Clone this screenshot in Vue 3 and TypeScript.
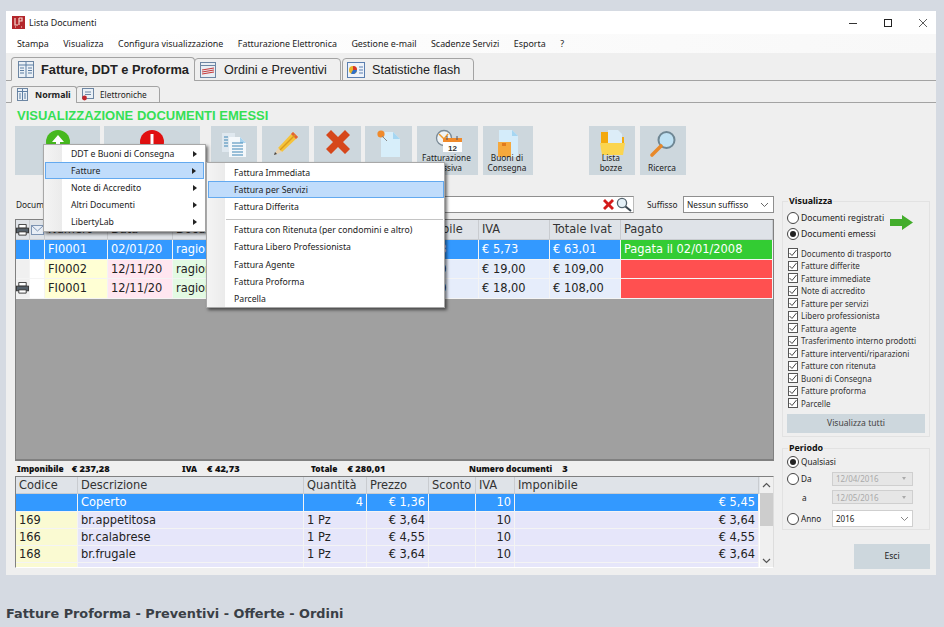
<script setup lang="ts">
const menus = ['Stampa', 'Visualizza', 'Configura visualizzazione', 'Fatturazione Elettronica', 'Gestione e-mail', 'Scadenze Servizi', 'Esporta', '?']

const tools = [
  { id: 'up', w: 85, ml: 0, label: ['', 'Emetti'] },
  { id: 'down', w: 96, ml: 4, label: ['', ''] },
  { id: 'docs', w: 46, ml: 11, label: ['', ''] },
  { id: 'pencil', w: 47, ml: 5, label: ['', ''] },
  { id: 'cross', w: 47, ml: 5, label: ['', ''] },
  { id: 'pin', w: 47, ml: 4, label: ['', ''] },
  { id: 'clock', w: 61, ml: 5, label: ['Fatturazione', 'Massiva'] },
  { id: 'box', w: 50, ml: 5, label: ['Buoni di', 'Consegna'] },
  { id: 'folder', w: 46, ml: 56, label: ['Lista', 'bozze'] },
  { id: 'lens', w: 46, ml: 5, label: ['', 'Ricerca'] },
]

const docs = [
  { print: false, num: 'FI0001', date: '02/01/20', doc: 'ragione sociale', imp: '€ 57,28', iva: '€ 5,73', tot: '€ 63,01', paid: 'Pagata il 02/01/2008', state: 'ok', sel: true },
  { print: false, num: 'FI0002', date: '12/11/20', doc: 'ragione sociale', imp: '€ 90,00', iva: '€ 19,00', tot: '€ 109,00', paid: '', state: 'no', sel: false },
  { print: true, num: 'FI0001', date: '12/11/20', doc: 'ragione sociale', imp: '€ 90,00', iva: '€ 18,00', tot: '€ 108,00', paid: '', state: 'no', sel: false },
]

const lines = [
  { c: '', d: 'Coperto', q: '4', right: true, p: '€ 1,36', iva: '10', imp: '€ 5,45', sel: true },
  { c: '169', d: 'br.appetitosa', q: '1 Pz', right: false, p: '€ 3,64', iva: '10', imp: '€ 3,64', sel: false },
  { c: '166', d: 'br.calabrese', q: '1 Pz', right: false, p: '€ 4,55', iva: '10', imp: '€ 4,55', sel: false },
  { c: '168', d: 'br.frugale', q: '1 Pz', right: false, p: '€ 3,64', iva: '10', imp: '€ 3,64', sel: false },
  { c: '', d: '', q: '', right: false, p: '', iva: '', imp: '', sel: false },
]

const checks = ['Documento di trasporto', 'Fatture differite', 'Fatture immediate', 'Note di accredito', 'Fatture per servizi', 'Libero professionista', 'Fattura agente', 'Trasferimento interno prodotti', 'Fatture interventi/riparazioni', 'Fatture con ritenuta', 'Buoni di Consegna', 'Fatture proforma', 'Parcelle']

const menu1 = ['DDT e Buoni di Consegna', 'Fatture', 'Note di Accredito', 'Altri Documenti', 'LibertyLab']
const menu2a = ['Fattura Immediata', 'Fattura per Servizi', 'Fattura Differita']
const menu2b = ['Fattura con Ritenuta (per condomini e altro)', 'Fattura Libero Professionista', 'Fattura Agente', 'Fattura Proforma', 'Parcella']
</script>

<template>
  <div class="page">
    <div class="window">
      <header class="titlebar">
        <svg class="appicon" width="13" height="13" viewBox="0 0 13 13">
          <rect width="13" height="13" fill="#b3262b" />
          <path d="M3 2v7h3M7 2v7M7 2h3v3H7M3 11h1M9 11h1" stroke="#f3d9d0" stroke-width="1.2" fill="none" />
        </svg>
        <span class="title">Lista Documenti</span>
        <div class="winbtns">
          <svg width="10" height="10" viewBox="0 0 10 10"><path d="M1 5.500h8" stroke="#333" /></svg>
          <svg width="10" height="10" viewBox="0 0 10 10"><rect x="1.500" y="1.500" width="7" height="7" fill="none" stroke="#222" /></svg>
          <svg width="10" height="10" viewBox="0 0 10 10"><path d="M1 1l8 8M9 1l-8 8" stroke="#333" stroke-width=".8" /></svg>
        </div>
      </header>

      <nav class="menubar">
        <span v-for="m in menus" :key="m">{{ m }}</span>
      </nav>

      <div class="maintabs">
        <div class="maintab active">
          <svg width="16" height="17" viewBox="0 0 16 17"><rect x=".5" y=".5" width="15" height="16" fill="#eaf0f6" stroke="#6d86a3" /><path d="M0 4h16M8 1v15M2 7h4M2 9.500h4M2 12h4M10 7h4M10 9.500h4M10 12h4" stroke="#5d7ea3" /></svg>
          <span>Fatture, DDT e Proforma</span>
        </div>
        <div class="maintab t2">
          <svg width="16" height="16" viewBox="0 0 16 16"><rect x=".5" y=".5" width="15" height="15" fill="#e9eef3" stroke="#6d86a3" /><path d="M0 3.500h16" stroke="#6d86a3" /><path d="M2 8l12-2M2 10l12-2M2 12l12-2" stroke="#c63d3d" stroke-width="1.200" /></svg>
          <span>Ordini e Preventivi</span>
        </div>
        <div class="maintab t3">
          <svg width="18" height="16" viewBox="0 0 18 16"><rect x=".5" y=".5" width="17" height="15" fill="#eef3fa" stroke="#5b7fb0" /><circle cx="6" cy="8" r="4" fill="#e8b62b" /><path d="M6 8V4a4 4 0 0 1 4 4z" fill="#d9362b" /><path d="M6 8h4a4 4 0 0 1-6 3.400z" fill="#2f6fc9" /><path d="M12 5h4M12 8h4M12 11h4" stroke="#5b7fb0" /></svg>
          <span>Statistiche flash</span>
        </div>
      </div>

      <div class="subtabs">
        <div class="subtab active">
          <svg width="11" height="13" viewBox="0 0 11 13"><rect x=".5" y=".5" width="10" height="12" fill="#eaf0f6" stroke="#6d86a3" /><path d="M0 3.500h11M5.500 1v11M2 6h2M2 8h2M2 10h2M7 6h2M7 8h2M7 10h2" stroke="#5d7ea3" /></svg>
          <span>Normali</span>
        </div>
        <div class="subtab t2">
          <svg width="13" height="13" viewBox="0 0 13 13"><rect x="1.500" y=".5" width="11" height="10" fill="#eaf0f6" stroke="#6d86a3" /><path d="M4 4h6M4 6.500h6" stroke="#6d86a3" /><circle cx="3.500" cy="10" r="2.400" fill="#c1272d" /></svg>
          <span>Elettroniche</span>
        </div>
      </div>

      <div class="content">
        <h1 class="heading">VISUALIZZAZIONE DOCUMENTI EMESSI</h1>

        <div class="toolbar">
          <div v-for="t in tools" :key="t.id" class="tool" :style="{ width: t.w + 'px', marginLeft: t.ml + 'px' }">
            <div class="toolicon">
              <svg v-if="t.id === 'up'" width="24" height="24" viewBox="0 0 24 24"><circle cx="12" cy="12" r="12" fill="#46b81e" /><path d="M12 5l6 7h-4v6h-4v-6H6z" fill="#fff" /></svg>
              <svg v-else-if="t.id === 'down'" width="24" height="24" viewBox="0 0 24 24"><circle cx="12" cy="12" r="12" fill="#e01010" /><path d="M10.500 4h3v11h-3z" fill="#fff" /></svg>
              <svg v-else-if="t.id === 'docs'" width="26" height="28" viewBox="0 0 26 28"><path d="M1 3h13v19H1z" fill="#dfe8ef" /><path d="M8 7h11l6 6v14H8z" fill="#f4f8fb" /><path d="M19 7l6 6h-6z" fill="#a9d3ee" /><path d="M3 7h4M3 10h4M3 13h4M3 16h4M11 13h11M11 16h11M11 19h11M11 22h11M11 25h11" stroke="#3f86b5" stroke-width="1.100" /></svg>
              <svg v-else-if="t.id === 'pencil'" width="26" height="26" viewBox="0 0 26 26"><path d="M5 18L20 2l5 5L9 22z" fill="#f5c33b" /><path d="M20 2l5 5-2 2-5-5z" fill="#e2603c" /><path d="M5 18l4 4-8 3z" fill="#e9d3b0" /><path d="M1 25l1-3 2 2z" fill="#444" /><path d="M7 20L22 5" stroke="#d99b1d" stroke-width="1.500" /></svg>
              <svg v-else-if="t.id === 'cross'" width="24" height="24" viewBox="0 0 24 24"><path d="M5 0l7 7 7-7 5 5-7 7 7 7-5 5-7-7-7 7-5-5 7-7-7-7z" fill="#d6471b" /></svg>
              <svg v-else-if="t.id === 'pin'" width="24" height="27" viewBox="0 0 24 27"><path d="M4 2h12l7 7v18H4z" fill="#d7eefa" /><path d="M16 2l7 7h-7z" fill="#a5d6f2" /><circle cx="4" cy="4" r="3.600" fill="#f08a2b" /><path d="M5 6l5 5" stroke="#888" /></svg>
              <svg v-else-if="t.id === 'clock'" width="28" height="22" viewBox="0 0 28 22"><circle cx="10" cy="8" r="7.500" fill="#f0f3f5" stroke="#7a8a96" stroke-width="1.300" /><path d="M5 4l5 5 4-5" fill="none" stroke="#f09a2b" stroke-width="1.500" /><rect x="9" y="9" width="19" height="13" fill="#fff" /><rect x="9" y="8" width="19" height="4" fill="#f08a2b" /><path d="M13 6v4M23 6v4" stroke="#556" /><text x="18.500" y="21" class="caltext">12</text></svg>
              <svg v-else-if="t.id === 'box'" width="22" height="27" viewBox="0 0 22 27"><path d="M2 0h13l6 6v21H2z" fill="#d4ecfa" /><path d="M15 0l6 6h-6z" fill="#a5d6f2" /><path d="M1 12h13v15H1z" fill="#f6a83c" /><path d="M5 13h4v3H5z" fill="#e07a1e" /></svg>
              <svg v-else-if="t.id === 'folder'" width="25" height="25" viewBox="0 0 25 25"><path d="M1 2h8v5h15v8H1z" fill="#f3a90e" /><path d="M8 0h10l4 4v14H8z" fill="#dcedf8" /><path d="M0 13h25l-2 12H2z" fill="#fbd54f" /></svg>
              <svg v-else width="26" height="27" viewBox="0 0 26 27"><circle cx="16.500" cy="10" r="8" fill="#bfe1f3" stroke="#6f8794" stroke-width="2" /><path d="M11 16L2 25" stroke="#e8892a" stroke-width="3.600" stroke-linecap="round" /></svg>
            </div>
            <div class="toollabel">
              <span>{{ t.label[0] }}&nbsp;</span>
              <span>{{ t.label[1] }}&nbsp;</span>
            </div>
          </div>
        </div>

        <div class="columns">
          <div class="leftcol">
            <div class="filter">
              <span class="flabel">Documento</span>
              <div class="finput">
                <svg width="11" height="11" viewBox="0 0 11 11"><path d="M2 0l3.500 3.500L9 0l2 2-3.500 3.500L11 9l-2 2-3.500-3.500L2 11 0 9l3.500-3.500L0 2z" fill="#d31a1a" /></svg>
                <svg width="16" height="15" viewBox="0 0 16 15"><circle cx="6" cy="6" r="4.600" fill="#e5f1f8" stroke="#54646e" stroke-width="1.300" /><path d="M9.500 9.500L15 14" stroke="#3a4650" stroke-width="2" /></svg>
              </div>
              <span class="sfx">Suffisso</span>
              <div class="fselect">
                <span>Nessun suffisso</span>
                <svg width="9" height="6" viewBox="0 0 9 6"><path d="M1 1l3.500 3.500L8 1" fill="none" stroke="#666" /></svg>
              </div>
            </div>

            <div class="grid1">
              <div class="row1 head">
                <div class="cell icell"><svg width="14" height="12" viewBox="0 0 14 12"><path d="M3 0h8v4H3z" fill="#fff" stroke="#333" /><rect x=".5" y="4" width="13" height="5" fill="#55606a" stroke="#333" /><path d="M3 8h8v3.500H3z" fill="#fff" stroke="#333" /></svg></div>
                <div class="cell icell"><svg width="13" height="10" viewBox="0 0 13 10"><rect x=".5" y=".5" width="12" height="9" fill="#e8eef6" stroke="#7d94b3" /><path d="M.5 .5L6.500 6l6-5.500" fill="none" stroke="#7d94b3" /></svg></div>
                <div class="cell">Numero</div>
                <div class="cell">Data</div>
                <div class="cell">Documento</div>
                <div class="cell">Imponibile</div>
                <div class="cell">IVA</div>
                <div class="cell">Totale Ivat</div>
                <div class="cell">Pagato</div>
              </div>
              <div v-for="(r, i) in docs" :key="i" class="row1 body" :class="{ sel: r.sel }">
                <div class="cell icell c-grey"><svg v-if="r.print" width="14" height="12" viewBox="0 0 14 12"><path d="M3 0h8v4H3z" fill="#fff" stroke="#333" /><rect x=".5" y="4" width="13" height="5" fill="#55606a" stroke="#333" /><path d="M3 8h8v3.500H3z" fill="#fff" stroke="#333" /></svg></div>
                <div class="cell icell c-white"></div>
                <div class="cell c-yellow">{{ r.num }}</div>
                <div class="cell c-pink">{{ r.date }}</div>
                <div class="cell c-green">{{ r.doc }}</div>
                <div class="cell c-blue">{{ r.imp }}</div>
                <div class="cell c-blue">{{ r.iva }}</div>
                <div class="cell c-blue">{{ r.tot }}</div>
                <div class="cell" :class="r.state === 'ok' ? 'paid' : 'unpaid'">{{ r.paid }}</div>
              </div>
            </div>

            <div class="totals">
              <span class="t-a"><b>Imponibile</b><b>€ 237,28</b></span>
              <span class="t-b"><b>IVA</b><b>€ 42,73</b></span>
              <span class="t-c"><b>Totale</b><b>€ 280,01</b></span>
              <span class="t-d"><b>Numero documenti</b><b>3</b></span>
            </div>

            <div class="grid2">
              <div class="g2main">
                <div class="row2 head">
                  <div class="cell">Codice</div>
                  <div class="cell">Descrizione</div>
                  <div class="cell">Quantità</div>
                  <div class="cell">Prezzo</div>
                  <div class="cell">Sconto</div>
                  <div class="cell">IVA</div>
                  <div class="cell">Imponibile</div>
                </div>
                <div v-for="(l, i) in lines" :key="i" class="row2 body" :class="{ sel: l.sel }">
                  <div class="cell c-gold">{{ l.c }}</div>
                  <div class="cell c-lav">{{ l.d }}</div>
                  <div class="cell c-lav" :class="{ right: l.right }">{{ l.q }}</div>
                  <div class="cell c-lav right">{{ l.p }}</div>
                  <div class="cell c-lav"></div>
                  <div class="cell c-lav right">{{ l.iva }}</div>
                  <div class="cell c-lav right">{{ l.imp }}</div>
                </div>
              </div>
              <div class="scroll">
                <svg width="9" height="6" viewBox="0 0 9 6"><path d="M1 5l3.500-3.500L8 5" fill="none" stroke="#555" stroke-width="1.200" /></svg>
                <div class="thumb"></div>
                <svg width="9" height="6" viewBox="0 0 9 6"><path d="M1 1l3.500 3.500L8 1" fill="none" stroke="#555" stroke-width="1.200" /></svg>
              </div>
            </div>
          </div>

          <div class="rightcol">
            <fieldset class="box vis">
              <legend>Visualizza</legend>
              <div class="radios">
                <div class="radios-list">
                  <label class="radio"><i></i>Documenti registrati</label>
                  <label class="radio on"><i></i>Documenti emessi</label>
                </div>
                <svg class="arrow" width="23" height="15" viewBox="0 0 23 15"><path d="M0 4h12V0l11 7.500L12 15v-4H0z" fill="#43ad2c" /></svg>
              </div>
              <div class="checks">
                <label v-for="c in checks" :key="c" class="check">
                  <i><svg width="8" height="8" viewBox="0 0 8 8"><path d="M.5 4l2.500 2.500L7.500 1" fill="none" stroke="#444" /></svg></i>{{ c }}
                </label>
              </div>
              <div class="showall">Visualizza tutti</div>
            </fieldset>

            <fieldset class="box per">
              <legend>Periodo</legend>
              <div class="prow r1"><label class="radio on"><i></i>Qualsiasi</label></div>
              <div class="prow r2"><label class="radio"><i></i>Da</label><div class="datebox"><span>12/04/2016</span><em></em></div></div>
              <div class="prow r3"><span class="alabel">a</span><div class="datebox"><span>12/05/2016</span><em></em></div></div>
              <div class="prow r4"><label class="radio"><i></i>Anno</label>
                <div class="yearbox"><span>2016</span><svg width="9" height="6" viewBox="0 0 9 6"><path d="M1 1l3.500 3.500L8 1" fill="none" stroke="#888" /></svg></div>
              </div>
            </fieldset>

            <div class="exit">Esci</div>
          </div>
        </div>
      </div>

      <div class="popup p1">
        <div v-for="(m, i) in menu1" :key="m" class="mi" :class="{ hot: i === 1 }">
          <span>{{ m }}</span><em class="tri"></em>
        </div>
      </div>
      <div class="popup p2">
        <div v-for="(m, i) in menu2a" :key="m" class="mi" :class="{ hot: i === 1 }"><span>{{ m }}</span></div>
        <div class="msep"></div>
        <div v-for="m in menu2b" :key="m" class="mi"><span>{{ m }}</span></div>
      </div>
    </div>

    <p class="caption">Fatture Proforma - Preventivi - Offerte - Ordini</p>
  </div>
</template>

<style>
html, body { margin: 0; background: #d5dae2; }
</style>

<style scoped>
.page { width: 944px; height: 627px; overflow: hidden; background: #d5dae2; font-family: "Noto Sans", "DejaVu Sans", sans-serif; color: #222; }
.window { position: relative; width: 930px; height: 564px; margin: 11px 0 0 6px; background: #efefef; display: flex; flex-direction: column; }
.caption { margin: 31px 0 0 6px; font: bold 12.85px/16px "DejaVu Sans", sans-serif; color: #3a3f46; }

.titlebar { height: 23px; background: #fff; display: flex; align-items: center; padding-left: 6px; flex: none; }
.title { margin-left: 4px; font-size: 8.9px; }
.winbtns { margin-left: auto; display: flex; gap: 24px; padding-right: 8px; }
.winbtns svg { display: block; margin-left: 1px; }
.menubar { height: 19px; flex: none; background: linear-gradient(90deg, #fff, #f8f8f8); display: flex; align-items: center; padding-left: 11px; font-size: 8.9px; gap: 14.5px; }

.maintabs { height: 28px; flex: none; display: flex; align-items: flex-end; padding-left: 5px; border-bottom: 1px solid #a3a3a3; box-sizing: border-box; }
.maintab { height: 23px; margin-bottom: -1px; box-sizing: border-box; border: 1px solid #a3a3a3; border-radius: 4px 4px 0 0; display: flex; align-items: center; font: 12.6px "Liberation Sans", sans-serif; background: #efefef; color: #222; white-space: nowrap; overflow: hidden; }
.maintab.active { width: 184px; font-weight: bold; font-size: 12.8px; border-bottom-color: #efefef; padding-left: 6px; gap: 7px; height: 24px; }
.maintab.t2 { width: 147px; padding-left: 5px; gap: 8px; margin-left: -1px; }
.maintab.t3 { width: 132px; padding-left: 4px; gap: 7px; margin-left: 1px; }
.subtabs { height: 22px; flex: none; display: flex; align-items: flex-end; padding-left: 5px; border-bottom: 1px solid #a3a3a3; box-sizing: border-box; }
.subtab { height: 17px; margin-bottom: -1px; box-sizing: border-box; border: 1px solid #a3a3a3; border-radius: 3px 3px 0 0; display: flex; align-items: center; font-size: 8.3px; }
.subtab.active { width: 66px; font-weight: bold; border-bottom-color: #efefef; padding-left: 5px; gap: 7px; font-size: 8.8px; }
.subtab.t2 { width: 84px; padding-left: 4px; gap: 6px; margin-left: -1px; }

.content { padding: 3px 6px 0 9px; flex: 1; min-height: 0; display: flex; flex-direction: column; }
.heading { margin: 0 0 0 2px; height: 20px; font: bold 13px/20px "Liberation Sans", sans-serif; color: #36df55; }
.toolbar { display: flex; height: 49px; }
.tool { background: #cdd7dd; display: flex; flex-direction: column; align-items: center; justify-content: space-between; box-sizing: border-box; height: 49px; overflow: hidden; padding: 4px 0 2px; }
.toolicon { height: 22px; display: flex; align-items: flex-start; justify-content: center; }
.toolicon svg { display: block; overflow: visible; }
.caltext { font: bold 8px "Liberation Sans", sans-serif; text-anchor: middle; fill: #333; }
.toollabel { display: flex; flex-direction: column; align-items: center; font-size: 8.3px; line-height: 10px; white-space: nowrap; }

.columns { display: grid; grid-template-columns: 759px 148px; column-gap: 8px; margin-top: 21px; }
.leftcol { display: flex; flex-direction: column; }
.filter { height: 17px; display: flex; align-items: center; font-size: 8.3px; }
.flabel { margin-left: 1px; width: 60px; }
.finput { width: 558px; height: 17px; box-sizing: border-box; background: #fff; border: 1px solid #8f8f8f; border-right-color: #bbb; display: flex; align-items: center; justify-content: flex-end; gap: 2px; padding-right: 1px; }
.sfx { margin-left: 13px; width: 36px; }
.fselect { width: 91px; height: 17px; box-sizing: border-box; background: #fff; border: 1px solid #8f8f8f; display: flex; align-items: center; justify-content: space-between; padding: 0 4px 0 3px; }

.grid1 { margin-top: 6px; height: 242px; box-sizing: border-box; background: #a0a0a0; border: 1px solid #808080; border-width: 1px 1px 2px 1px; overflow: hidden; }
.row1 { display: grid; grid-template-columns: 14px 15px 63px 65px 227px 79px 71px 71px 152px; }
.row2 { display: grid; grid-template-columns: 62px 226px 63px 62px 47px 39px 244px; }
.head { background: #dfe3e8; color: #333; }
.cell { box-sizing: border-box; font: 12.7px/18px "DejaVu Sans Condensed", "DejaVu Sans", sans-serif; font-stretch: condensed; padding: 0 3px; white-space: nowrap; overflow: hidden; border-right: 1px solid #c9ccd0; border-bottom: 1px solid #c9ccd0; }
.row1 .cell { height: 19.500px; line-height: 18.500px; }
.row1.head .cell { height: 20px; }
.row2 .cell { height: 17.300px; line-height: 16px; }
.icell { padding: 0; display: flex; align-items: center; justify-content: center; }
.right { text-align: right; }
.body .cell { border-color: #f4f4f4; }
.c-grey { background: #f0f0f0; }
.c-white { background: #fff; }
.c-yellow { background: #ffffd4; }
.c-pink { background: #ffe6f0; }
.c-green { background: #e3fae3; }
.c-blue { background: #e6edfb; }
.c-gold { background: #fafad2; }
.c-lav { background: #e6e6fa; }
.paid { background: #33cc33; color: #fff; }
.unpaid { background: #ff5050; }
.sel .cell { background: #3399ff; color: #fff; }
.sel .paid { background: #33cc33; }

.totals { height: 15px; display: flex; align-items: center; font: bold 8.3px "Noto Sans", sans-serif; color: #111; }
.totals span { display: flex; align-items: center; gap: 10px; }
.totals b { white-space: nowrap; }
.totals b:last-child { font-size: 9.300px; }
.totals .t-a { margin-left: 2px; width: 165px; gap: 8px; }
.t-b { width: 129px; }
.t-c { width: 158px; }
.grid2 { height: 92px; box-sizing: border-box; border: 1px solid #808080; border-right-color: #ddd; border-bottom-color: #fff; display: flex; overflow: hidden; background: #fff; }
.g2main { width: 744px; flex: none; overflow: hidden; }
.scroll { flex: 1; background: #f0f0f0; display: flex; flex-direction: column; align-items: center; justify-content: space-between; padding: 5px 0 3px; box-sizing: border-box; }
.thumb { align-self: stretch; height: 33px; margin-bottom: 27px; background: #cdcdcd; }

.rightcol { display: flex; flex-direction: column; }
.box { margin: 0; padding: 0 4px; border: 1px solid #e2e2e2; font-size: 8.6px; min-width: 0; box-sizing: border-box; }
.box legend { font-weight: bold; padding: 0 1px; margin-left: 1px; line-height: 12px; color: #111; font-size: 8.9px; }
.vis { height: 242px; margin-top: -1px; }
.radios { height: 31px; margin-top: 4px; display: flex; }
.radios-list { display: flex; flex-direction: column; gap: 2px; width: 103px; flex: none; }
.radio { display: flex; align-items: center; gap: 2px; height: 14px; white-space: nowrap; font-size: 8.6px; }
.radio i { width: 12px; height: 12px; box-sizing: border-box; border: 1px solid #444; border-radius: 50%; background: #fff; flex: none; display: flex; align-items: center; justify-content: center; }
.radio.on i::after { content: ""; width: 6px; height: 6px; border-radius: 50%; background: #222; }
.arrow { margin: 4px 0 0 0; flex: none; }
.checks { margin-top: 5px; padding-left: 1px; display: flex; flex-direction: column; }
.check { height: 12.500px; display: flex; align-items: center; gap: 3px; white-space: nowrap; font-size: 8px; color: #333; }
.check i { width: 10px; height: 10px; box-sizing: border-box; border: 1px solid #555; background: #fff; flex: none; display: flex; align-items: center; justify-content: center; }
.check i svg { display: block; }
.showall { height: 19px; margin-top: 4px; background: #cdd7dd; text-align: center; line-height: 19px; font-size: 8.6px; color: #444; }
.per { height: 88px; margin-top: 5px; display: block; }
.prow { display: flex; align-items: center; }
.per .radio { font-size: 8.2px; }
.r1 { height: 15px; }
.r2 { height: 19px; }
.r3 { height: 18px; }
.r4 { height: 21px; margin-top: 2px; }
.prow .radio { width: 45px; }
.alabel { width: 45px; text-indent: 15px; font-size: 8.2px; }
.datebox { width: 81px; height: 14px; box-sizing: border-box; background: #e6e6e6; border: 1px solid #cfcfcf; display: flex; align-items: center; justify-content: space-between; padding: 0 6px 0 3px; color: #aaa; font-size: 8px; }
.datebox em { width: 0; height: 0; border: 2px solid transparent; border-top: 3px solid #aaa; border-bottom: 0; }
.yearbox { width: 81px; height: 17px; box-sizing: border-box; background: #fff; border: 1px solid #cfcfcf; display: flex; align-items: center; justify-content: space-between; padding: 0 3px; font-size: 8px; }
.exit { height: 25px; width: 76px; margin: 14px 0 0 auto; background: #cdd7dd; text-align: center; line-height: 25px; font-size: 8.6px; }

.popup { position: absolute; background: #fff; border: 1px solid #a8a8a8; box-shadow: 2px 2px 3px rgba(0, 0, 0, .55); box-sizing: border-box; font-size: 8.7px; color: #222; }
.popup::before { content: ""; position: absolute; left: 0; top: 0; bottom: 0; width: 18px; background: linear-gradient(90deg, #f4f4f4, #ebebeb); }
.p1 { left: 37px; top: 133px; width: 163px; height: 88px; }
.p2 { left: 200px; top: 151px; width: 239px; height: 146px; padding-top: 1px; }
.mi { position: relative; height: 17.200px; display: flex; align-items: center; padding-left: 27px; box-sizing: border-box; white-space: nowrap; }
.p1 .mi.hot { margin: 0 1px; padding-left: 26px; }
.mi.hot { background: #c0dcfb; outline: 1px solid #63a9ef; outline-offset: -1px; }
.p2 .mi.hot { margin: 0 0 0 1px; padding-left: 26px; }
.tri { margin-left: auto; margin-right: 8px; width: 0; height: 0; border-left: 4px solid #222; border-top: 3px solid transparent; border-bottom: 3px solid transparent; }
.msep { position: relative; height: 1px; background: #c4c4c4; margin: 3px 1px 2px 19px; }
</style>
